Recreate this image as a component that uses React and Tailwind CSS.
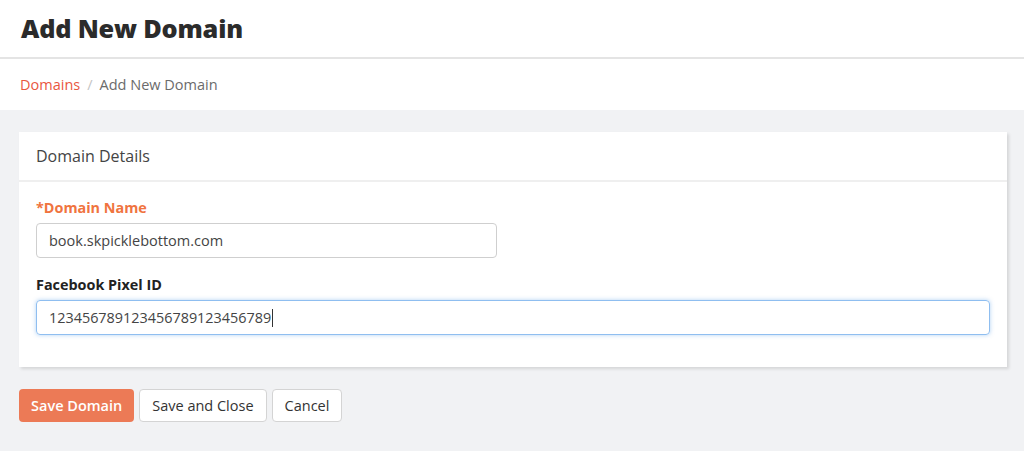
export default function App() {
  return (
    <div className="w-[1024px] h-[451px] bg-[#f1f2f4] overflow-hidden" style={{ fontFamily: '"Open Sans", sans-serif' }}>
      <div className="bg-white h-[59px] border-b-2 border-[#e4e4e4] flex items-center px-[21px]">
        <h1 className="text-[25.3px] font-extrabold text-[#2b2b2b] tracking-[-0.2px] leading-none">Add New Domain</h1>
      </div>
      <div className="bg-white h-[51px] flex items-center px-[20px] text-[14.5px]">
        <span className="text-[#e9573f]">Domains</span>
        <span className="text-[#c4c4c4] mx-[7px]">/</span>
        <span className="text-[#6b6b6b]">Add New Domain</span>
      </div>
      <div className="px-[19px] pt-[22px] pr-[17px]">
        <div className="bg-white shadow-[2px_2px_3px_rgba(0,0,0,0.12)]">
          <div className="h-[50px] flex items-center px-[17px] border-b-2 border-[#efefef] text-[16px] text-[#444]">
            Domain Details
          </div>
          <div className="px-[17px] pt-[16px] pb-[32px]">
            <div className="text-[14.4px] font-bold text-[#f0743f] leading-[20px]">*Domain Name</div>
            <div className="mt-[5px] w-[461px] h-[35px] border border-[#cfcfcf] rounded-[4px] flex items-center px-[12px] text-[14.5px] text-[#444]">
              book.skpicklebottom.com
            </div>
            <div className="mt-[17px] text-[14.4px] font-bold text-[#222] leading-[20px]">Facebook Pixel ID</div>
            <div className="mt-[5px] h-[35px] border border-[#8fbef0] rounded-[4px] shadow-[0_0_4px_rgba(102,165,235,0.5)] flex items-center px-[12px] text-[14.4px] text-[#444]">
              123456789123456789123456789<span className="w-px h-[18px] bg-[#333] ml-px"></span>
            </div>
          </div>
        </div>
        <div className="flex gap-[5px] mt-[22px]">
          <button className="h-[33px] px-[12px] rounded-[4px] bg-[#ec7a56] text-white text-[14.5px] font-semibold">Save Domain</button>
          <button className="h-[33px] px-[12px] rounded-[4px] bg-white border border-[#d4d4d4] text-[#333] text-[14.5px]">Save and Close</button>
          <button className="h-[33px] px-[12px] rounded-[4px] bg-white border border-[#d4d4d4] text-[#333] text-[14.5px]">Cancel</button>
        </div>
      </div>
    </div>
  );
}
